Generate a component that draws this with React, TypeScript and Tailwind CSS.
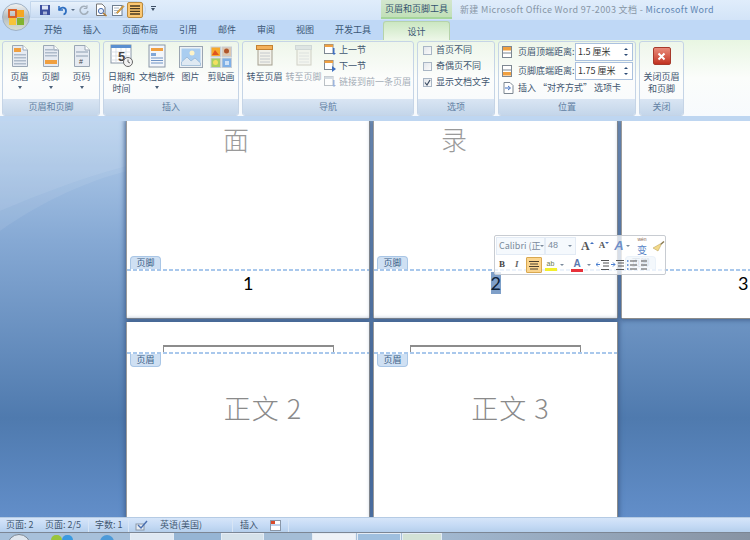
import type { ReactNode } from 'react'

const cjk = "font-['Noto_Sans_CJK_SC','Noto_Sans',sans-serif]"

function PageDoc({ tone = 'lines', mark }: { tone?: string; mark?: ReactNode }) {
  return (
    <svg width="20" height="24" viewBox="0 0 20 24">
      <path d="M2.5 1.5H13L17.5 6V22.5H2.5Z" fill="#e6ebf2" stroke="#9aa7b5" />
      <path d="M13 1.5V6H17.5" fill="#fff" stroke="#9aa7b5" />
      {tone === 'head' && <rect x="4" y="4" width="7" height="4" fill="#f0a040" />}
      {tone === 'foot' && <rect x="4" y="16" width="12" height="4" fill="#f0a040" />}
      {tone === 'num' ? (
        <>
          <rect x="4" y="7" width="12" height="2" fill="#b9c4d1" />
          <rect x="4" y="11" width="12" height="2" fill="#b9c4d1" />
          {mark}
        </>
      ) : (
        <>
          <rect x="4" y={tone === 'head' ? 10 : 5} width="12" height="1.5" fill="#aebbca" />
          <rect x="4" y={tone === 'head' ? 13 : 8} width="12" height="1.5" fill="#aebbca" />
          <rect x="4" y={tone === 'head' ? 16 : 11} width="12" height="1.5" fill="#aebbca" />
          {tone === 'head' && <rect x="4" y="19" width="12" height="1.5" fill="#aebbca" />}
        </>
      )}
    </svg>
  )
}

function CalendarIcon() {
  return (
    <svg width="24" height="24" viewBox="0 0 24 24">
      <rect x="1" y="1" width="20" height="18" fill="#fff" stroke="#8a97a8" />
      <rect x="1" y="1" width="20" height="3" fill="#5b8fd0" />
      <path d="M1 8H21M1 12H21M1 16H21M6 4V19M11 4V19M16 4V19" stroke="#cdd5df" strokeWidth=".7" />
      <text x="8" y="17" fontSize="13" fontWeight="700" fill="#444" fontFamily="Liberation Sans">5</text>
      <circle cx="18" cy="18" r="4.5" fill="#f2f2f2" stroke="#666" />
      <path d="M18 15.5V18L20 19" stroke="#444" fill="none" strokeWidth=".8" />
    </svg>
  )
}

function PartsIcon() {
  return (
    <svg width="18" height="24" viewBox="0 0 18 24">
      <rect x="1" y="1" width="16" height="22" fill="#f3f6fa" stroke="#8a97a8" />
      <rect x="3" y="4" width="12" height="3" fill="#f0a040" />
      <rect x="3" y="9" width="5" height="3" fill="#7fa6d8" />
      <path d="M3 14H15M3 16.5H15M3 19H15" stroke="#6f93c5" />
    </svg>
  )
}

function PictureIcon() {
  return (
    <svg width="24" height="22" viewBox="0 0 24 22">
      <rect x=".5" y=".5" width="23" height="21" fill="#eef2f5" stroke="#9aa5b2" />
      <rect x="2.5" y="2.5" width="19" height="17" fill="#a9cdf0" />
      <circle cx="13" cy="7" r="2.5" fill="#fdf3c8" />
      <path d="M2.5 19.5V16L8 11L12 15L16 12L21.5 17V19.5Z" fill="#dfe9f2" stroke="#7ba0c4" strokeWidth=".5" />
    </svg>
  )
}

function ClipIcon() {
  return (
    <svg width="22" height="22" viewBox="0 0 22 22">
      <rect x="1" y="1" width="9.5" height="9.5" fill="#f7a92c" stroke="#c7ced6" />
      <path d="M2 9L5 4L9 9Z" fill="#e0541e" />
      <rect x="12" y="1" width="9.5" height="9.5" fill="#dcc7b0" stroke="#c7ced6" />
      <circle cx="16.5" cy="5" r="2.5" fill="#b0552a" />
      <rect x="1" y="12" width="9.5" height="9.5" fill="#a8cf60" stroke="#c7ced6" />
      <circle cx="5.5" cy="16.5" r="2.5" fill="#f2e060" />
      <rect x="12" y="12" width="9.5" height="9.5" fill="#7fb0e6" stroke="#c7ced6" />
      <rect x="15" y="15" width="4" height="4" fill="#cfe2f7" />
    </svg>
  )
}

function GoToIcon({ dim }: { dim?: boolean }) {
  return (
    <svg width="20" height="24" viewBox="0 0 20 24" opacity={dim ? 0.45 : 1}>
      <rect x="3" y="3" width="14" height="18" fill="#f1f1ea" stroke="#a59f90" />
      <rect x="1.5" y="1.5" width="16" height="4" fill={dim ? '#c9d1d9' : '#f4b15a'} stroke={dim ? '#aab3bd' : '#c48232'} />
      <path d="M5 9H15M5 12H15M5 15H15M5 18H15" stroke="#c4c8cc" />
    </svg>
  )
}

function SectionIcon({ down, dim }: { down?: boolean; dim?: boolean }) {
  return (
    <svg width="13" height="12" viewBox="0 0 13 12" className="shrink-0" opacity={dim ? 0.5 : 1}>
      <rect x=".5" y=".5" width="8.5" height="9" fill="#fff" stroke="#7d8792" />
      <rect x=".5" y=".5" width="8.5" height="2.5" fill={dim ? '#aebccb' : '#f0a040'} />
      <path d={down ? 'M8 6V12L12 9Z' : 'M9 4H10.5V9H12L10 11L8 9H9Z'} fill="#3f6fc0" />
    </svg>
  )
}

function HeaderDistIcon({ foot }: { foot?: boolean }) {
  return (
    <svg width="12" height="12" viewBox="0 0 12 12" className="shrink-0">
      <rect x=".5" y=".5" width="9" height="11" fill="#fff" stroke="#7d8792" />
      <rect x="1" y={foot ? 7 : 1} width="8" height="3.5" fill="#f0a040" />
      <path d={foot ? 'M1 5H9' : 'M1 7H9'} stroke="#7d8792" />
    </svg>
  )
}

function RibbonButton({ icon, label, sub, arrow, dim, w }: { icon: ReactNode; label: string; sub?: string; arrow?: boolean; dim?: boolean; w: string }) {
  return (
    <div className={`flex flex-col items-center shrink-0 ${w}`}>
      <div className="h-[26px] flex items-end justify-center">{icon}</div>
      <div className={`text-[9px] leading-[13px] mt-[2px] whitespace-nowrap ${dim ? 'text-[#a3acb6]' : 'text-[#3f5670]'}`}>{label}</div>
      {sub && <div className="text-[9px] leading-[12px] whitespace-nowrap text-[#3f5670]">{sub}</div>}
      {arrow && <div className="mt-[3px] w-0 h-0 border-x-[2.5px] border-x-transparent border-t-[3px] border-t-[#4a607a]" />}
    </div>
  )
}

function RibbonGroup({ title, w, children }: { title: string; w: string; children: ReactNode }) {
  return (
    <div className={`${w} h-[75px] shrink-0 flex flex-col rounded-[3px] border border-[#c5d4e6] bg-gradient-to-b from-[#eef6ea] via-[#fcfdfc] to-[#f6f9fc] overflow-hidden`}>
      <div className="flex-1 min-h-0 flex">{children}</div>
      <div className="h-[16px] shrink-0 bg-gradient-to-b from-[#d9e5f3] to-[#c4d6ea] text-[9px] leading-[16px] text-center text-[#6180a3]">{title}</div>
    </div>
  )
}

function Check({ label, on }: { label: string; on?: boolean }) {
  return (
    <div className="flex items-center h-[16px] gap-[4px] pl-[1px]">
      <div className="w-[9px] h-[9px] border border-[#a9b6c5] bg-gradient-to-br from-[#e3e7ec] to-[#fafafa] flex items-center justify-center">
        {on && (
          <svg width="7" height="7" viewBox="0 0 7 7">
            <path d="M1 3.5L3 6L6 1" fill="none" stroke="#3d4f66" strokeWidth="1.2" />
          </svg>
        )}
      </div>
      <span className="text-[9px] text-[#3f5670] whitespace-nowrap">{label}</span>
    </div>
  )
}

function Spin({ label, value, foot }: { label: string; value: string; foot?: boolean }) {
  return (
    <div className="flex items-center h-[19px]">
      <HeaderDistIcon foot={foot} />
      <span className="text-[9px] text-[#3f5670] ml-[4px] whitespace-nowrap w-[57px]">{label}</span>
      <div className="w-[58px] h-[18px] border border-[#abc1de] bg-white flex items-center pl-[2px] text-[9px] text-[#333] justify-between pr-[4px]">
        <span className="whitespace-nowrap">{value}</span>
        <div className="flex flex-col gap-[4px]">
          <div className="w-0 h-0 border-x-[2px] border-x-transparent border-b-[2px] border-b-[#2b4a75]" />
          <div className="w-0 h-0 border-x-[2px] border-x-transparent border-t-[2px] border-t-[#2b4a75]" />
        </div>
      </div>
    </div>
  )
}

function QuickIcon({ children, active }: { children: ReactNode; active?: boolean }) {
  return (
    <div className={`w-[16px] h-[16px] flex items-center justify-center shrink-0 ${active ? 'bg-[#fbc772] border border-[#b98a3f] rounded-[2px]' : ''}`}>{children}</div>
  )
}

function TitleBar() {
  return (
    <div className="h-[20px] flex bg-gradient-to-b from-[#e0edfb] to-[#d3e4f8] relative">
      <div className="ml-[30px] mt-[1px] w-[116px] h-[17px] rounded-r-full bg-gradient-to-b from-[#e8f1fb] to-[#c9dcf3] border border-[#c3d6ec] flex items-center pl-[6px] gap-[1px]">
        <QuickIcon>
          <svg width="12" height="12" viewBox="0 0 12 12"><rect x="1" y="1" width="10" height="10" fill="#3d4f9e" /><rect x="3" y="1.5" width="6" height="4" fill="#dfe6f7" /><rect x="4" y="7.5" width="4" height="3" fill="#a9b4d8" /></svg>
        </QuickIcon>
        <QuickIcon>
          <svg width="12" height="12" viewBox="0 0 12 12"><path d="M3 2V6H7" fill="none" stroke="#2f6fc0" strokeWidth="1.5" /><path d="M3 6C5 2.5 10 3 10 7C10 8.5 9 10 7.5 10.5" fill="none" stroke="#2f6fc0" strokeWidth="1.8" /></svg>
        </QuickIcon>
        <div className="w-0 h-0 border-x-[2px] border-x-transparent border-t-[2.5px] border-t-[#5a6f88]" />
        <QuickIcon>
          <svg width="12" height="12" viewBox="0 0 12 12"><path d="M9 3.5A4 4 0 1 0 10 7" fill="none" stroke="#a3afbb" strokeWidth="1.6" /><path d="M9 1V4.5H5.8" fill="none" stroke="#a3afbb" /></svg>
        </QuickIcon>
        <QuickIcon>
          <svg width="14" height="14" viewBox="0 0 14 14"><path d="M2.5 1H8L11 4V12.5H2.5Z" fill="#fff" stroke="#777" /><circle cx="7" cy="8" r="2.6" fill="#e7eefb" stroke="#4a6fb0" /><path d="M9 10L12.5 13" stroke="#b07a30" strokeWidth="1.6" /></svg>
        </QuickIcon>
        <QuickIcon>
          <svg width="14" height="14" viewBox="0 0 14 14"><rect x="1.5" y="2.5" width="9.5" height="10" fill="#fff" stroke="#6f7f90" /><path d="M3 5H8M3 7.5H7M3 10H6" stroke="#aab6c2" /><path d="M5.5 9.5L12 2.5L13 3.5L6.5 10.5Z" fill="#e9a63a" stroke="#8a6620" strokeWidth=".5" /></svg>
        </QuickIcon>
        <QuickIcon active>
          <svg width="12" height="12" viewBox="0 0 12 12"><path d="M1 2H11M1 4.7H11M1 7.3H11M1 10H11" stroke="#4a3a20" strokeWidth="1.3" /></svg>
        </QuickIcon>
      </div>
      <div className="ml-[5px] mt-[6px] flex flex-col gap-[1px]">
        <div className="w-[5px] h-[1px] bg-[#3d4f66]" />
        <div className="w-0 h-0 border-x-[2.5px] border-x-transparent border-t-[3px] border-t-[#3d4f66]" />
      </div>
      <div className="ml-[225px] w-[71px] h-[19px] bg-gradient-to-b from-[#d3e6cf] to-[#c2e0b8] border-b-2 border-b-[#a5d59b] text-[9px] leading-[18px] text-center text-[#34526f] whitespace-nowrap">页眉和页脚工具</div>
      <div className="ml-[8px] text-[9px] leading-[20px] whitespace-nowrap text-[#8795a5] tracking-[0.35px]">
        新建 Microsoft Office Word 97-2003 文档 - <span className="text-[#5e86b3]">Microsoft Word</span>
      </div>
      <div className="absolute left-[2px] top-[3px] w-[28px] h-[28px] rounded-full bg-gradient-to-b from-[#f2f3f2] via-[#b5bcc0] to-[#d9dfd5] border border-[#9fb1c5] flex items-center justify-center z-10">
        <svg width="17" height="17" viewBox="0 0 17 17">
          <rect x="1" y="1" width="7" height="7" fill="none" stroke="#dd5a1e" strokeWidth="1.8" />
          <rect x="9" y="1" width="7" height="7" fill="#f5a623" />
          <rect x="1" y="9" width="7" height="7" fill="#f6c33b" />
          <rect x="9" y="9" width="7" height="7" fill="#82b431" />
        </svg>
      </div>
    </div>
  )
}

function TabRow() {
  const tabs = ['开始', '插入', '页面布局', '引用', '邮件', '审阅', '视图', '开发工具']
  return (
    <div className="h-[20px] bg-[#bfd8f6] flex items-end">
      <div className="flex gap-[21px] pl-[44px] h-[20px] items-center">
        {tabs.map((t) => (
          <span key={t} className="text-[9px] text-[#3a5675] whitespace-nowrap">{t}</span>
        ))}
      </div>
      <div className="ml-[12px] w-[67px] h-[19px] rounded-t-[3px] border border-b-0 border-[#b6d3aa] bg-gradient-to-b from-[#cbe7c2] to-[#edf7e8] text-[9px] leading-[19px] text-center text-[#3a5675]">设计</div>
    </div>
  )
}

function Ribbon() {
  return (
    <div className="h-[81px] bg-[#bed6f1]">
      <div className="h-[76px] bg-gradient-to-b from-[#e8f6e2] via-[#fbfdfb] to-[#f7fafd] pl-[2px] pt-[1px] flex gap-[3px] items-start">
        <RibbonGroup title="页眉和页脚" w="w-[98px]">
          <div className="flex pl-[1px]">
            <RibbonButton w="w-[31px]" label="页眉" arrow icon={<PageDoc tone="head" />} />
            <RibbonButton w="w-[31px]" label="页脚" arrow icon={<PageDoc tone="foot" />} />
            <RibbonButton w="w-[31px]" label="页码" arrow icon={<PageDoc tone="num" mark={<text x="7" y="20" fontSize="7" fill="#444" fontFamily="Liberation Sans">#</text>} />} />
          </div>
        </RibbonGroup>
        <RibbonGroup title="插入" w="w-[136px]">
          <div className="flex pl-[1px]">
            <RibbonButton w="w-[33px]" label="日期和" sub="时间" icon={<CalendarIcon />} />
            <RibbonButton w="w-[38px]" label="文档部件" arrow icon={<PartsIcon />} />
            <RibbonButton w="w-[29px]" label="图片" icon={<PictureIcon />} />
            <RibbonButton w="w-[32px]" label="剪贴画" icon={<ClipIcon />} />
          </div>
        </RibbonGroup>
        <RibbonGroup title="导航" w="w-[172px]">
          <div className="flex pl-[2px]">
            <RibbonButton w="w-[39px]" label="转至页眉" icon={<GoToIcon />} />
            <RibbonButton w="w-[39px]" label="转至页脚" dim icon={<GoToIcon dim />} />
            <div className="flex flex-col pl-[1px]">
              <div className="flex items-center h-[16px] gap-[2px]"><SectionIcon /><span className="text-[9px] text-[#3f5670]">上一节</span></div>
              <div className="flex items-center h-[16px] gap-[2px]"><SectionIcon down /><span className="text-[9px] text-[#3f5670]">下一节</span></div>
              <div className="flex items-center h-[16px] gap-[2px]"><SectionIcon dim /><span className="text-[9px] text-[#a3acb6] whitespace-nowrap">链接到前一条页眉</span></div>
            </div>
          </div>
        </RibbonGroup>
        <RibbonGroup title="选项" w="w-[78px]">
          <div className="flex flex-col pl-[4px]">
            <Check label="首页不同" />
            <Check label="奇偶页不同" />
            <Check label="显示文档文字" on />
          </div>
        </RibbonGroup>
        <RibbonGroup title="位置" w="w-[138px]">
          <div className="flex flex-col pl-[3px]">
            <Spin label="页眉顶端距离:" value="1.5 厘米" />
            <Spin label="页脚底端距离:" value="1.75 厘米" foot />
            <div className="flex items-center h-[16px] gap-[4px] pl-[1px]">
              <svg width="11" height="12" viewBox="0 0 11 12"><path d="M1 .5H7L10 3.5V11.5H1Z" fill="#fff" stroke="#7d8792" /><path d="M2 6H6.5M5 4L7.5 6L5 8" fill="none" stroke="#3f6fc0" /></svg>
              <span className="text-[9px] text-[#3f5670] whitespace-nowrap">插入 “对齐方式” 选项卡</span>
            </div>
          </div>
        </RibbonGroup>
        <RibbonGroup title="关闭" w="w-[45px]">
          <div className="w-full flex flex-col items-center pt-[5px]">
            <div className="w-[18px] h-[18px] rounded-[2px] bg-gradient-to-b from-[#e98a7a] to-[#c2301f] border border-[#a73a2c] flex items-center justify-center">
              <svg width="9" height="9" viewBox="0 0 9 9"><path d="M1.5 1.5L7.5 7.5M7.5 1.5L1.5 7.5" stroke="#fff" strokeWidth="2" /></svg>
            </div>
            <div className="text-[9px] leading-[13px] mt-[5px] text-[#3f5670] whitespace-nowrap">关闭页眉</div>
            <div className="text-[9px] leading-[12px] text-[#3f5670] whitespace-nowrap">和页脚</div>
          </div>
        </RibbonGroup>
      </div>
    </div>
  )
}

function Tag({ label, foot }: { label: string; foot?: boolean }) {
  return (
    <div className={`w-[31px] h-[13px] bg-[#cfe0f3] border border-[#a9c6e6] text-[9px] leading-[11px] text-center text-[#3c5f86] whitespace-nowrap ${foot ? 'rounded-t-[4px] border-b-0' : 'rounded-b-[4px] border-t-0'}`}>{label}</div>
  )
}

function Dash() {
  return <div className="h-[2px] shrink-0 bg-[repeating-linear-gradient(90deg,#a9c8ec_0_4px,transparent_4px_6px)]" />
}

const pageShadow = 'shadow-[-1px_0_0_#9a9a9a,1px_0_0_#8c8c8c,0_1px_0_#8c8c8c,0_0_5px_2px_#3f5f8c]'

function FooterPage({ heading, num, headingLeft, selected }: { heading?: string; num: string; headingLeft: string; selected?: boolean }) {
  return (
    <div className={`h-[197px] bg-white flex flex-col ${pageShadow}`}>
      <div className={`h-[36px] text-[26px] font-extralight leading-[36px] text-[#9a9a9a] ${cjk} ${headingLeft}`}>{heading}</div>
      <div className="h-[112px] flex items-end pl-[3px]">
        <Tag label="页脚" foot />
      </div>
      <Dash />
      <div className="text-center">
        <span className={`inline-block w-[10px] text-[18px] leading-[22px] font-['Lato',sans-serif] ${selected ? 'bg-[#7f9fc8] text-[#0d2238]' : 'text-black'}`}>{num}</span>
      </div>
    </div>
  )
}

function HeaderPage({ body }: { body: string }) {
  return (
    <div className={`h-[196px] bg-white flex flex-col ${pageShadow}`}>
      <div className="h-[30px] flex items-end">
        <div className="ml-[36px] w-[171px] h-[7px] border border-b-0 border-[#8c8c8c] border-t-2" />
      </div>
      <Dash />
      <div className="pl-[3px]"><Tag label="页眉" /></div>
      <div className={`mt-[22px] pl-[30px] text-center text-[27px] font-extralight leading-[38px] tracking-[1px] text-[#8a8a8a] ${cjk}`}>{body}</div>
    </div>
  )
}

function ToolArrow({ className = '' }: { className?: string }) {
  return <div className={`w-0 h-0 shrink-0 border-x-[2px] border-x-transparent border-t-[2.5px] border-t-[#7a8a9c] ${className}`} />
}

function MiniToolbar() {
  return (
    <div className="absolute left-[494px] top-[235px] w-[172px] h-[40px] rounded-[2px] border border-[#c8ccd2] bg-[#ffffffc4] flex flex-col font-['Liberation_Sans',sans-serif] z-10">
      <div className="h-[20px] flex items-center pl-[1px]">
        <div className="w-[49px] h-[18px] border border-[#e3ebf5] bg-[#f3f7fc]/80 text-[9px] pl-[2px] text-[#7a8a9c] flex items-center justify-between pr-[3px] overflow-hidden">
          <span className={`whitespace-nowrap ${cjk}`}>Calibri (正</span><ToolArrow />
        </div>
        <div className="w-[31px] h-[18px] border border-[#e3ebf5] bg-[#f3f7fc]/80 text-[9px] pl-[2px] text-[#7a8a9c] flex items-center justify-between pr-[3px]">
          <span>48</span><ToolArrow />
        </div>
        <span className="ml-[5px] text-[12px] font-['Liberation_Serif',serif] font-bold text-[#555]">A</span>
        <span className="w-0 h-0 border-x-[2px] border-x-transparent border-b-[2.5px] border-b-[#3f6fc0] -mt-[7px]" />
        <span className="ml-[5px] text-[9px] font-['Liberation_Serif',serif] font-bold text-[#555]">A</span>
        <span className="w-0 h-0 border-x-[2px] border-x-transparent border-t-[2.5px] border-t-[#3f6fc0] -mt-[7px]" />
        <span className="ml-[5px] text-[13px] font-bold text-[#6f8fc8] italic">A</span>
        <ToolArrow className="ml-[2px]" />
        <span className="ml-[6px] w-[13px] flex flex-col items-center">
          <span className="text-[5px] leading-[5px] text-[#8a6a50]">wén</span>
          <span className={`mt-[3px] text-[10px] leading-[10px] text-[#5a86c8] ${cjk}`}>变</span>
        </span>
        <svg width="13" height="13" viewBox="0 0 13 13" className="ml-[3px]"><path d="M8 4L11.5 1L12.5 2L9 5Z" fill="#8a7a50" /><path d="M8 4L9 5L6 11L1 8Z" fill="#f3d98a" stroke="#b39a50" strokeWidth=".5" /></svg>
      </div>
      <div className="h-[18px] flex items-center pl-[4px]">
        <span className="text-[9px] font-bold text-[#444] w-[12px] font-['Liberation_Serif',serif]">B</span>
        <span className="ml-[4px] text-[9px] italic font-bold text-[#666] w-[11px] font-['Liberation_Serif',serif]">I</span>
        <div className="w-[16px] h-[16px] bg-[#fbd58e] border border-[#d9a850] rounded-[1px] flex items-center justify-center">
          <svg width="10" height="10" viewBox="0 0 10 10"><path d="M0 1.5H10M1 4H9M0 6.5H10M1 9H9" stroke="#4a4030" /></svg>
        </div>
        <div className="ml-[2px] w-[13px] flex flex-col items-center">
          <span className="text-[7px] leading-[9px] text-[#6a7a50]">ab</span>
          <div className="w-[12px] h-[3px] bg-[#f3f02c]" />
        </div>
        <ToolArrow className="ml-[3px]" />
        <div className="ml-[7px] w-[12px] flex flex-col items-center">
          <span className="text-[10px] leading-[10px] font-bold text-[#5a78b0]">A</span>
          <div className="w-[12px] h-[3px] bg-[#e8313a]" />
        </div>
        <ToolArrow className="ml-[4px]" />
        <svg width="14" height="12" viewBox="0 0 14 12" className="ml-[5px]"><path d="M5 1.5H13M7 4H13M7 7H13M5 10.5H13" stroke="#555" /><path d="M4 5.5H0M2 3.5L0 5.5L2 7.5" fill="none" stroke="#4a7fd0" /></svg>
        <svg width="14" height="12" viewBox="0 0 14 12" className="ml-[1px]"><path d="M5 1.5H13M7 4H13M7 7H13M5 10.5H13" stroke="#555" /><path d="M0 5.5H4M2 3.5L4 5.5L2 7.5" fill="none" stroke="#4a7fd0" /></svg>
        <svg width="22" height="12" viewBox="0 0 22 12" className="ml-[1px]"><path d="M4 2H11M4 6H11M4 10H11M15 2H21M15 6H21M15 10H21" stroke="#555" /><path d="M1 2H2.5M1 6H2.5M1 10H2.5" stroke="#4a7fd0" strokeWidth="1.4" /></svg>
      </div>
    </div>
  )
}

function Workspace() {
  return (
    <div className="relative h-[396px] overflow-hidden bg-[linear-gradient(180deg,#b6d0ed_0%,#86a9d4_30%,#4f7aae_75%,#628ec9_100%)] pl-[127px]">
      <svg width="127" height="120" viewBox="0 0 127 120" className="absolute left-0 top-0">
        <path d="M0 0H127V45C85 56 40 73 0 90Z" fill="#ffffff" opacity=".14" />
        <path d="M0 90C40 73 85 56 127 45V50C80 62 35 85 0 110Z" fill="#ffffff" opacity=".08" />
      </svg>
      <div className="relative grid grid-cols-[242px_243px_242px] gap-x-[5px] gap-y-[4px] w-[740px]">
        <FooterPage heading="面" num="1" headingLeft="pl-[96px]" />
        <FooterPage heading="录" num="2" headingLeft="pl-[67px]" selected />
        <FooterPage num="3" headingLeft="" />
        <HeaderPage body="正文 2" />
        <HeaderPage body="正文 3" />
      </div>
    </div>
  )
}

function StatusBar() {
  return (
    <div className="h-[15px] bg-gradient-to-b from-[#d6e5f9] via-[#c6dbf5] to-[#b5cfec] border-t border-[#b5cbe4] flex items-center text-[9px] text-[#3f5670] whitespace-nowrap">
      <span className="ml-[6px] w-[39px]">页面: 2</span>
      <span className="w-[43px]">页面: 2/5</span>
      <span className="h-[13px] border-l border-[#d8e5f5]" />
      <span className="ml-[6px] w-[33px]">字数: 1</span>
      <span className="h-[13px] border-l border-[#d8e5f5]" />
      <svg width="13" height="11" viewBox="0 0 13 11" className="ml-[6px]"><rect x="1" y="4" width="8" height="6" fill="#e8edf3" stroke="#8a97a8" /><path d="M3 5L6 8L12 1" fill="none" stroke="#4a6fb0" strokeWidth="1.4" /></svg>
      <span className="ml-[12px] w-[72px]">英语(美国)</span>
      <span className="h-[13px] border-l border-[#d8e5f5]" />
      <span className="ml-[7px] w-[30px]">插入</span>
      <svg width="11" height="11" viewBox="0 0 11 11"><rect x=".5" y=".5" width="10" height="10" fill="#fff" stroke="#8a97a8" /><rect x="1" y="1" width="4" height="3" fill="#d94a2a" /><path d="M1 5H10" stroke="#7fa6d8" /></svg>
      <span className="ml-[7px] h-[13px] border-l border-[#d8e5f5]" />
    </div>
  )
}

function Taskbar() {
  return (
    <div className="h-[9px] border-t border-[#7c8694] bg-gradient-to-r from-[#a7c0da] via-[#a7c0da] to-[#8793a3] flex overflow-hidden">
      <div className="ml-[7px] mt-[1px] w-[24px] h-[24px] rounded-full bg-[#dfe6ee] border border-[#7b8794] shrink-0" />
      <div className="ml-[20px] mt-[2px] w-[11px] h-[10px] rounded-full bg-[#9ac43a] shrink-0" />
      <div className="mt-[2px] w-[11px] h-[10px] rounded-full bg-[#3b9ae0] shrink-0" />
      <div className="ml-[27px] mt-[2px] w-[14px] h-[10px] rounded-t-full bg-[#4d9ad8] shrink-0" />
      <div className="ml-[16px] w-[44px] h-[10px] border border-[#e4ecf5] bg-[#dfe8f2] shrink-0" />
      <div className="w-[47px] h-[10px] bg-[#96b5d4] shrink-0" />
      <div className="w-[43px] h-[10px] border border-[#e4ecf5] bg-[#d6e2ea] shrink-0" />
      <div className="w-[48px] h-[10px] bg-[#a4bdd6] shrink-0" />
      <div className="w-[44px] h-[10px] border border-[#e4ecf5] bg-[#eef2f7] shrink-0" />
      <div className="ml-[1px] w-[44px] h-[10px] border border-[#e4ecf5] bg-[#9fbfde] shrink-0" />
      <div className="ml-[1px] w-[40px] h-[10px] border border-[#e4ecf5] bg-[#d3e2d6] shrink-0" />
    </div>
  )
}

export default function App() {
  return (
    <div className={`w-[750px] h-[540px] overflow-hidden relative bg-[#4a74a9] ${cjk}`}>
      <TitleBar />
      <TabRow />
      <Ribbon />
      <Workspace />
      <MiniToolbar />
      <StatusBar />
      <Taskbar />
    </div>
  )
}
